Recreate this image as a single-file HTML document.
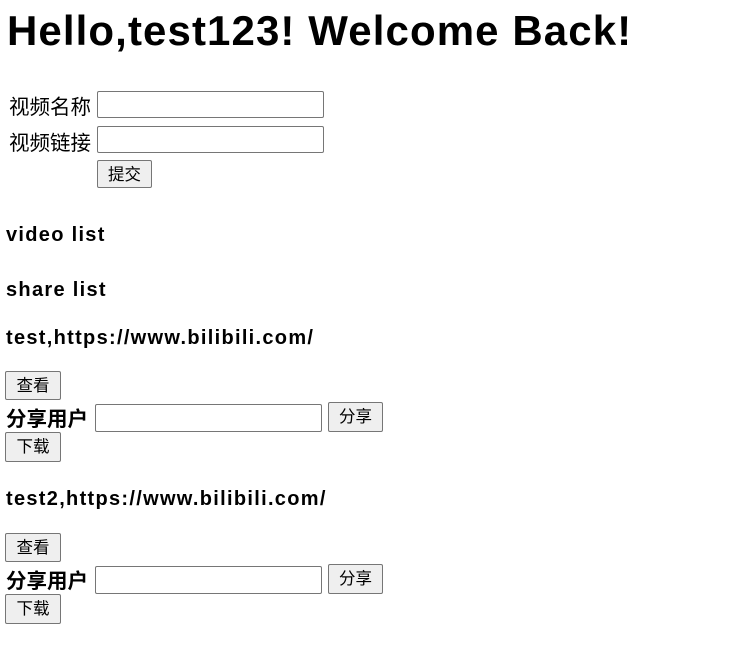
<!DOCTYPE html>
<html><head><meta charset="utf-8"><style>
body{margin:0;width:729px;height:648px;background:#fff;font-family:"Liberation Sans","Noto Sans CJK SC",sans-serif;color:#000;position:relative;overflow:hidden}
.a{position:absolute;white-space:nowrap}
h1{margin:0;font-size:42px;font-weight:bold;letter-spacing:1.1px}
.b{font-weight:bold;font-size:20px;letter-spacing:1.3px}
.lbl{font-size:20.5px}
.u{font-weight:bold;font-size:20.5px}
.in{position:absolute;border:1px solid #767676;border-radius:2px;background:#fff;box-sizing:border-box}
.btn{position:absolute;border:1px solid #767676;border-radius:2px;background:#efefef;box-sizing:border-box;font-size:16.5px;text-align:center;line-height:28px}
</style></head><body>
<h1 class="a" style="left:7px;top:7px">Hello,test123! Welcome Back!</h1>
<div class="a lbl" style="left:9px;top:90px">视频名称</div>
<div class="in" style="left:97px;top:91px;width:227px;height:27px"></div>
<div class="a lbl" style="left:9px;top:126px">视频链接</div>
<div class="in" style="left:97px;top:126px;width:227px;height:27px"></div>
<div class="btn" style="left:97px;top:160px;width:55px;height:28px">提交</div>
<div class="a b" style="left:6px;top:224px">video list</div>
<div class="a b" style="left:6px;top:279px">share list</div>

<div class="a b" style="left:6px;top:327px">test,https://www.bilibili.com/</div>
<div class="btn" style="left:5px;top:371px;width:56px;height:29px">查看</div>
<div class="a u" style="left:6px;top:402px">分享用户</div>
<div class="in" style="left:95px;top:404px;width:227px;height:28px"></div>
<div class="btn" style="left:328px;top:402px;width:55px;height:30px">分享</div>
<div class="btn" style="left:5px;top:432px;width:56px;height:30px">下载</div>

<div class="a b" style="left:6px;top:488px">test2,https://www.bilibili.com/</div>
<div class="btn" style="left:5px;top:533px;width:56px;height:29px">查看</div>
<div class="a u" style="left:6px;top:564px">分享用户</div>
<div class="in" style="left:95px;top:566px;width:227px;height:28px"></div>
<div class="btn" style="left:328px;top:564px;width:55px;height:30px">分享</div>
<div class="btn" style="left:5px;top:594px;width:56px;height:30px">下载</div>
</body></html>
